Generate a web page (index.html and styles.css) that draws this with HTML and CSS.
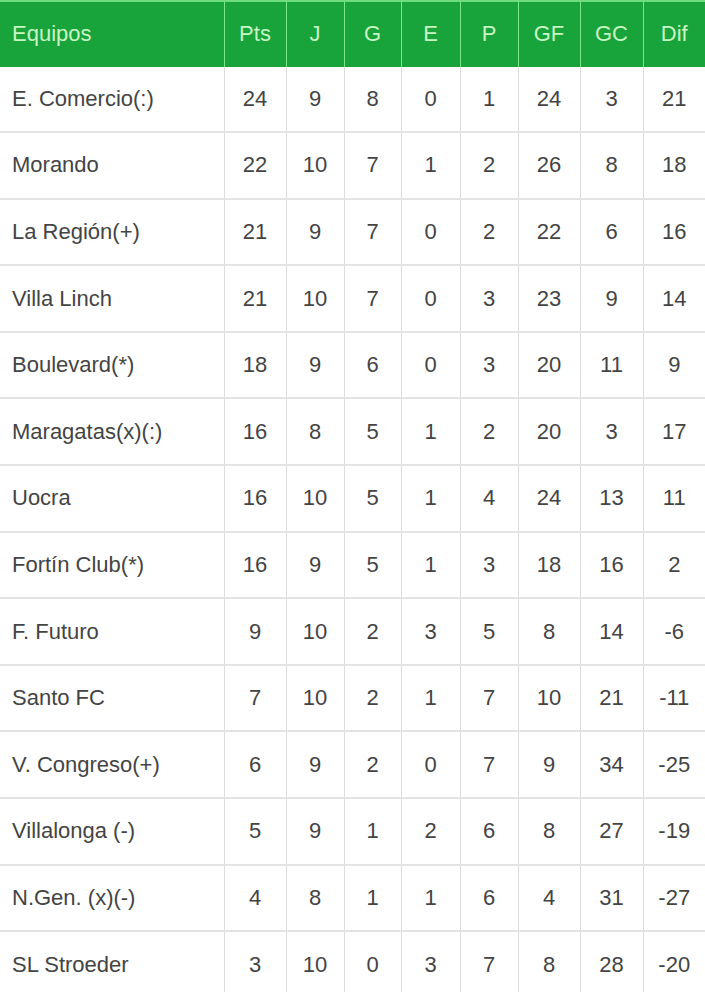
FILE: index.html
```html
<!DOCTYPE html>
<html lang="es">
<head>
<meta charset="utf-8">
<title>Tabla de posiciones</title>
<link rel="stylesheet" href="styles.css">
</head>
<body>
<table class="standings">
  <colgroup>
    <col class="c-team"><col class="c-pts"><col class="c-j"><col class="c-g"><col class="c-e"><col class="c-p"><col class="c-gf"><col class="c-gc"><col class="c-dif">
  </colgroup>
  <thead>
    <tr><th class="team">Equipos</th><th>Pts</th><th>J</th><th>G</th><th>E</th><th>P</th><th>GF</th><th>GC</th><th>Dif</th></tr>
  </thead>
  <tbody>
    <tr><td class="team">E. Comercio(:)</td><td>24</td><td>9</td><td>8</td><td>0</td><td>1</td><td>24</td><td>3</td><td>21</td></tr>
    <tr><td class="team">Morando</td><td>22</td><td>10</td><td>7</td><td>1</td><td>2</td><td>26</td><td>8</td><td>18</td></tr>
    <tr><td class="team">La Región(+)</td><td>21</td><td>9</td><td>7</td><td>0</td><td>2</td><td>22</td><td>6</td><td>16</td></tr>
    <tr><td class="team">Villa Linch</td><td>21</td><td>10</td><td>7</td><td>0</td><td>3</td><td>23</td><td>9</td><td>14</td></tr>
    <tr><td class="team">Boulevard(*)</td><td>18</td><td>9</td><td>6</td><td>0</td><td>3</td><td>20</td><td>11</td><td>9</td></tr>
    <tr><td class="team">Maragatas(x)(:)</td><td>16</td><td>8</td><td>5</td><td>1</td><td>2</td><td>20</td><td>3</td><td>17</td></tr>
    <tr><td class="team">Uocra</td><td>16</td><td>10</td><td>5</td><td>1</td><td>4</td><td>24</td><td>13</td><td>11</td></tr>
    <tr><td class="team">Fortín Club(*)</td><td>16</td><td>9</td><td>5</td><td>1</td><td>3</td><td>18</td><td>16</td><td>2</td></tr>
    <tr><td class="team">F. Futuro</td><td>9</td><td>10</td><td>2</td><td>3</td><td>5</td><td>8</td><td>14</td><td>-6</td></tr>
    <tr><td class="team">Santo FC</td><td>7</td><td>10</td><td>2</td><td>1</td><td>7</td><td>10</td><td>21</td><td>-11</td></tr>
    <tr><td class="team">V. Congreso(+)</td><td>6</td><td>9</td><td>2</td><td>0</td><td>7</td><td>9</td><td>34</td><td>-25</td></tr>
    <tr><td class="team">Villalonga (-)</td><td>5</td><td>9</td><td>1</td><td>2</td><td>6</td><td>8</td><td>27</td><td>-19</td></tr>
    <tr><td class="team">N.Gen. (x)(-)</td><td>4</td><td>8</td><td>1</td><td>1</td><td>6</td><td>4</td><td>31</td><td>-27</td></tr>
    <tr><td class="team">SL Stroeder</td><td>3</td><td>10</td><td>0</td><td>3</td><td>7</td><td>8</td><td>28</td><td>-20</td></tr>
  </tbody>
</table>
</body>
</html>
```
FILE: styles.css
```css
html, body {
  margin: 0;
  padding: 0;
  background: #ffffff;
}
.standings {
  width: 705px;
  border-collapse: collapse;
  table-layout: fixed;
  font-family: "Liberation Sans", Arial, sans-serif;
  font-size: 22px;
}
.c-team { width: 224px; }
.c-pts { width: 62px; }
.c-j { width: 58px; }
.c-g { width: 57px; }
.c-e { width: 59px; }
.c-p { width: 58px; }
.c-gf { width: 62px; }
.c-gc { width: 63px; }
.c-dif { width: 62px; }

.standings th {
  height: 64.5px;
  padding: 0;
  background: #19a33b;
  color: #c6f7c4;
  font-weight: normal;
  text-align: center;
  border-top: 2px solid #6fdc80;
  border-left: 1px solid #7be58a;
  border-right: 1px solid #7be58a;
}
.standings th.team {
  text-align: left;
  padding-left: 12px;
  border-left: none;
}
.standings td {
  height: 64.6px;
  padding: 0;
  color: #444444;
  text-align: center;
  border-bottom: 2px solid #e3e3e3;
  border-left: 1px solid #dcdcdc;
  border-right: 1px solid #dcdcdc;
}
.standings td.team {
  text-align: left;
  padding-left: 12px;
  border-left: none;
}
.standings tr > :last-child {
  border-right: none;
}
```
